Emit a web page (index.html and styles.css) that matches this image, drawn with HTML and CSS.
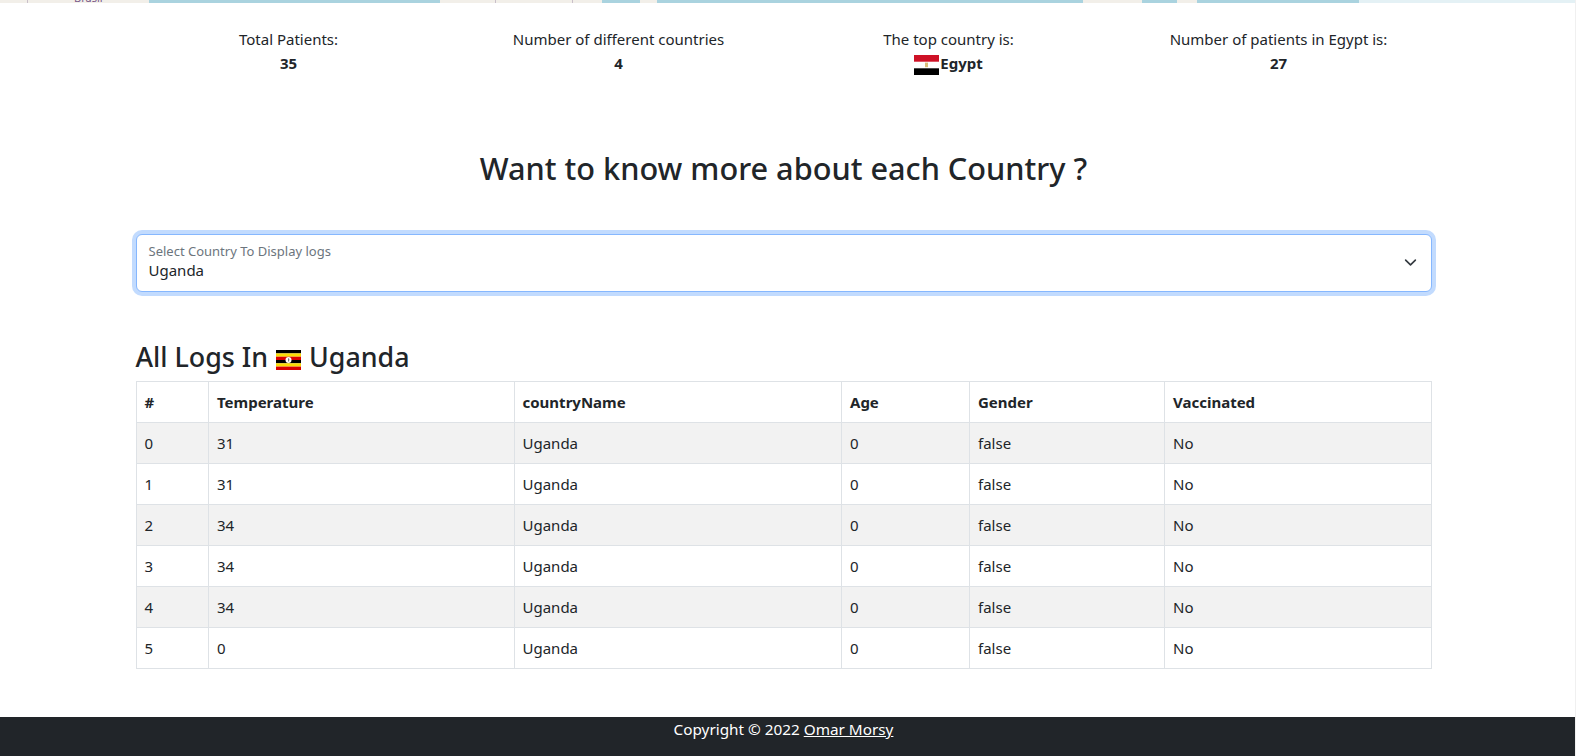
FILE: index.html
```html
<!DOCTYPE html>
<html lang="en">
<head>
<meta charset="utf-8">
<title>Patient Logs</title>
<link rel="stylesheet" href="styles.css">
</head>
<body>
<div class="page">
  <div class="map-strip">
    <span class="land s149"></span><span class="water s291"></span><span class="land s162"></span><span class="water s38"></span><span class="land s17"></span><span class="water s426"></span><span class="land s59"></span><span class="water s35"></span><span class="land s20"></span><span class="water s162"></span><span class="pale"></span>
    <span class="map-label">Brasil</span>
    <span class="map-line line-a"></span><span class="map-line line-b"></span><span class="map-line line-c"></span>
  </div>
  <div class="content">
    <section class="stats">
      <div class="stat"><div>Total Patients:</div><strong>35</strong></div>
      <div class="stat"><div>Number of different countries</div><strong>4</strong></div>
      <div class="stat"><div>The top country is:</div><strong class="flag-value">
        <svg class="flag" viewBox="0 0 25 20" aria-hidden="true"><rect width="25" height="20" fill="#fff"/><rect width="25" height="6.7" fill="#ce1126"/><rect y="13.3" width="25" height="6.7" fill="#000"/><rect x="11" y="7.6" width="3" height="4.6" fill="#d8bf7a"/></svg>Egypt</strong></div>
      <div class="stat"><div>Number of patients in Egypt is:</div><strong>27</strong></div>
    </section>
    <main class="container">
      <h2 class="title">Want to know more about each Country ?</h2>
      <div class="floating">
        <select id="country" class="select">
          <option>Uganda</option>
          <option>Egypt</option>
          <option>Brazil</option>
        </select>
        <label for="country" class="float-label">Select Country To Display logs</label>
        <svg class="chevron" viewBox="0 0 16 16" aria-hidden="true"><path d="M2 5l6 6 6-6" fill="none" stroke="#343a40" stroke-width="2" stroke-linecap="round" stroke-linejoin="round"/></svg>
      </div>
      <h3 class="logs-title">All Logs In
        <svg class="flag" viewBox="0 0 25 20" aria-hidden="true"><rect width="25" height="3.4" fill="#000"/><rect y="3.4" width="25" height="3.3" fill="#fcdc04"/><rect y="6.7" width="25" height="3.3" fill="#d90000"/><rect y="10" width="25" height="3.3" fill="#000"/><rect y="13.3" width="25" height="3.3" fill="#fcdc04"/><rect y="16.6" width="25" height="3.4" fill="#d90000"/><circle cx="12.5" cy="10" r="3" fill="#fff"/><path d="M12 8l1.4 1-.4 3-1-1z" fill="#777"/></svg>
        Uganda</h3>
      <table class="logs">
        <colgroup><col class="c1"><col class="c2"><col class="c3"><col class="c4"><col class="c5"><col class="c6"></colgroup>
        <thead><tr><th>#</th><th>Temperature</th><th>countryName</th><th>Age</th><th>Gender</th><th>Vaccinated</th></tr></thead>
        <tbody>
          <tr><td>0</td><td>31</td><td>Uganda</td><td>0</td><td>false</td><td>No</td></tr>
          <tr><td>1</td><td>31</td><td>Uganda</td><td>0</td><td>false</td><td>No</td></tr>
          <tr><td>2</td><td>34</td><td>Uganda</td><td>0</td><td>false</td><td>No</td></tr>
          <tr><td>3</td><td>34</td><td>Uganda</td><td>0</td><td>false</td><td>No</td></tr>
          <tr><td>4</td><td>34</td><td>Uganda</td><td>0</td><td>false</td><td>No</td></tr>
          <tr><td>5</td><td>0</td><td>Uganda</td><td>0</td><td>false</td><td>No</td></tr>
        </tbody>
      </table>
    </main>
  </div>
  <footer class="footer">Copyright © 2022 <a href="#">Omar Morsy</a></footer>
</div>
</body>
</html>
```
FILE: styles.css
```css
* { box-sizing: border-box; }
html, body { margin: 0; height: 100%; overflow: hidden; }
body {
  background: #fff;
  color: #212529;
  font-family: "Noto Sans", "Open Sans", sans-serif;
  font-size: 15px;
  line-height: 24px;
}
.page {
  width: 1575px;
  height: 756px;
  display: flex;
  flex-direction: column;
  box-shadow: 1px 0 0 #f0f0f0;
}
.map-strip { position: relative; display: flex; height: 3px; flex: none; overflow: hidden; }
.land { background: #f2efe9; }
.water { background: #aad3df; }
.pale { background: #e4f1f5; flex: 1; }
.s149 { width: 149px; }
.s291 { width: 291px; }
.s162 { width: 162px; }
.s38 { width: 38px; }
.s17 { width: 17px; }
.s426 { width: 426px; }
.s59 { width: 59px; }
.s35 { width: 35px; }
.s20 { width: 20px; }
.map-label {
  position: absolute;
  left: 74px;
  top: -9px;
  font-size: 11px;
  line-height: 13px;
  color: #7a5a8a;
}
.map-line { position: absolute; top: 0; width: 1px; height: 3px; background: #c9bfc9; }
.line-a { left: 27px; }
.line-b { left: 495px; }
.line-c { left: 572px; }
.content { width: 1567px; flex: 1; }
.stats {
  display: grid;
  grid-template-columns: repeat(4, 330px);
  justify-content: center;
  padding-top: 24px;
  text-align: center;
}
.stat strong { display: block; font-weight: 700; }
.flag-value { display: flex !important; justify-content: center; align-items: center; }
.flag { width: 25px; height: 20px; display: inline-block; vertical-align: -3px; margin: 0 1px; }
.flag-value .flag { margin: 3px 1px 0 0; }
.container { width: 1296px; margin: 0 auto; }
.title {
  margin: 74px 0 0;
  font-size: 30.7px;
  line-height: 38px;
  font-weight: 500;
  text-align: center;
}
.floating { position: relative; margin-top: 47px; }
.select {
  display: block;
  width: 100%;
  height: 58px;
  padding: 20px 36px 6px 12px;
  appearance: none;
  background: #fff;
  border: 1px solid #86b7fe;
  border-radius: 6px;
  box-shadow: 0 0 0 4px rgba(13, 110, 253, .25);
  color: #212529;
  font: inherit;
  outline: none;
}
.float-label {
  position: absolute;
  left: 13px;
  top: 7px;
  font-size: 13px;
  line-height: 20px;
  color: #6c757d;
}
.chevron { position: absolute; right: 15px; top: 22px; width: 13px; height: 13px; }
.logs-title {
  margin: 48px 0 0;
  font-size: 26.8px;
  line-height: 34px;
  font-weight: 500;
}
.logs {
  width: 100%;
  border-collapse: collapse;
  table-layout: fixed;
  margin-top: 7px;
}
.logs th, .logs td {
  border: 1px solid #dee2e6;
  padding: 8px;
  height: 41px;
  text-align: left;
}
.logs th { font-weight: 700; }
.logs tbody tr:nth-child(odd) td { background: #f2f2f2; }
.c1 { width: 72.5px; }
.c2 { width: 305.5px; }
.c3 { width: 327.5px; }
.c4 { width: 128px; }
.c5 { width: 195px; }
.footer {
  flex: none;
  height: 39px;
  padding-right: 8px;
  background: #212529;
  color: #fff;
  text-align: center;
  font-size: 15.3px;
  line-height: 25px;
}
.footer a { color: #fff; text-decoration: underline; }
```
